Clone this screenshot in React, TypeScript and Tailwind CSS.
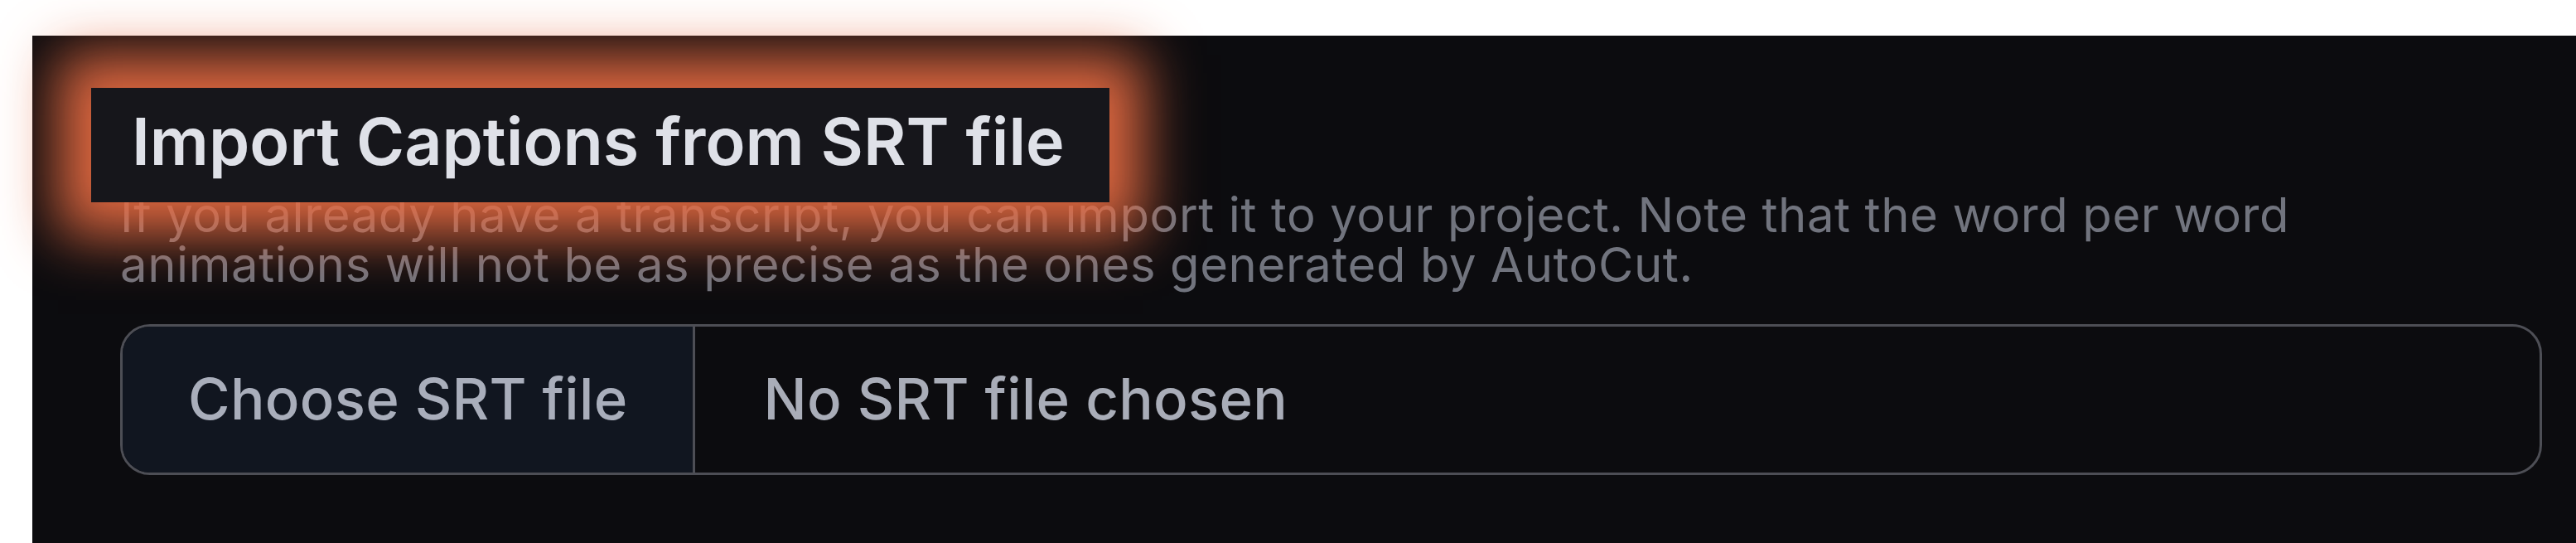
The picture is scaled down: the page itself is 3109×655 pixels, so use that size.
export default function App() {
  return (
    <div className="min-h-screen bg-white pt-[43px] pl-[39px] font-['Inter','Noto_Sans',sans-serif]">
      <div className="h-[612px] bg-[#0c0c0f] pl-[71px] pr-[41px] pt-[63px]">
        <SrtImport />
      </div>
    </div>
  )
}

function SrtImport() {
  return (
    <div>
      {/* highlighted heading */}
      <div className="relative z-10 inline-flex h-[138px] items-center bg-[#16161b] pl-[49px] pr-[54px] pb-[9px] shadow-[0_0_64px_40px_rgba(232,108,66,0.95)]">
        <h2 className="text-[79px] font-semibold leading-none text-[#dfe1e8]">
          Import Captions from SRT file
        </h2>
      </div>
      <p className="-mt-[15px] ml-[35px] max-w-[2760px] text-[58px] leading-[60px] tracking-[0.6px] text-[#71747e]">
        If you already have a transcript, you can import it to your project. Note that the word per word
        animations will not be as precise as the ones generated by AutoCut.
      </p>
      <div className="ml-[35px] mt-[42px] flex h-[182px] overflow-hidden rounded-[36px] border-[3px] border-[#4d4e55]">
        <button className="flex items-center border-r-[3px] border-[#4d4e55] bg-[#111620] px-[79px] text-[69px] font-medium tracking-[0.3px] text-[#a9aebb]">
          Choose SRT file
        </button>
        <span className="flex items-center pl-[82px] text-[69px] font-medium tracking-[0.3px] text-[#a9adb8]">
          No SRT file chosen
        </span>
      </div>
    </div>
  )
}
